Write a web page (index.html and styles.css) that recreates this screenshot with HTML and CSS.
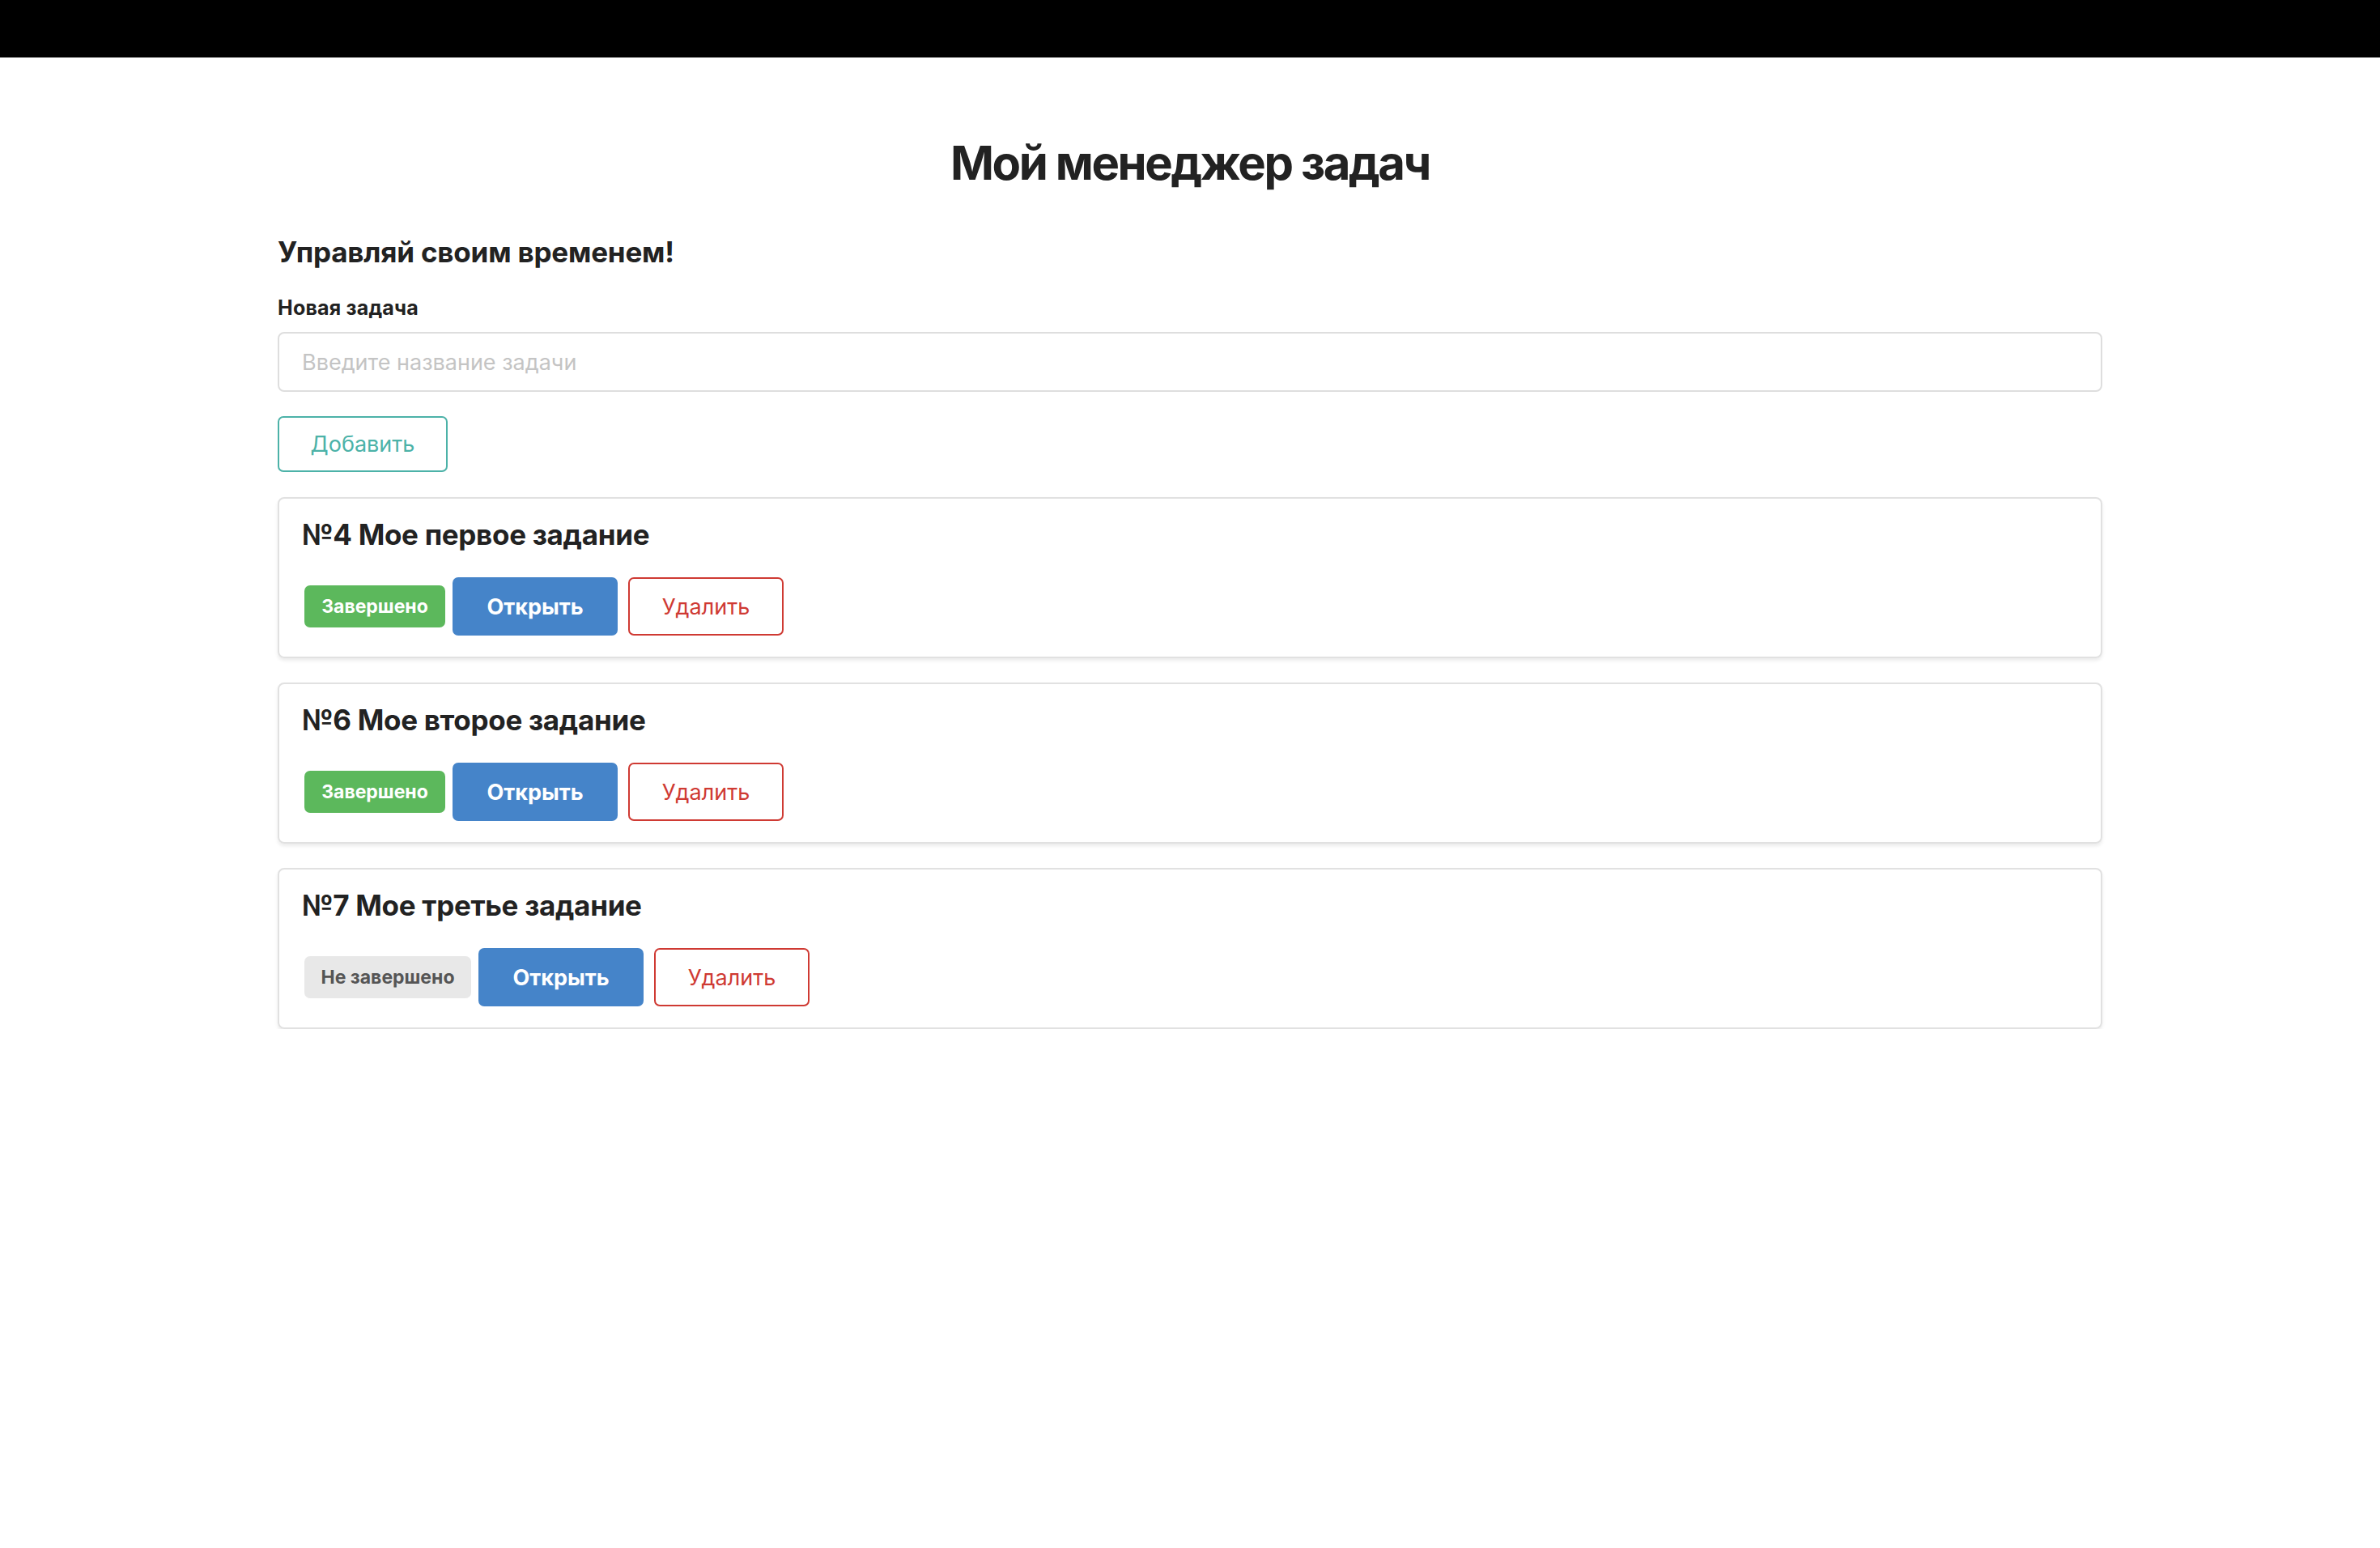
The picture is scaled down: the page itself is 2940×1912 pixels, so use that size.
FILE: index.html
```html
<!DOCTYPE html>
<html lang="ru">
<head>
<meta charset="utf-8">
<title>Мой менеджер задач</title>
<link rel="stylesheet" href="styles.css">
</head>
<body>
<header class="topbar"></header>
<main class="container">
  <h1 class="page-title">Мой менеджер задач</h1>
  <h2 class="subtitle">Управляй своим временем!</h2>
  <label class="field-label" for="task">Новая задача</label>
  <input class="field-input" id="task" type="text" placeholder="Введите название задачи">
  <button class="btn btn-add" type="button">Добавить</button>
  <section class="task-list">
    <article class="task-card">
      <h3 class="task-title">№4 Мое первое задание</h3>
      <div class="task-actions">
        <span class="badge badge-done">Завершено</span>
        <button class="btn btn-open" type="button">Открыть</button>
        <button class="btn btn-delete" type="button">Удалить</button>
      </div>
    </article>
    <article class="task-card">
      <h3 class="task-title">№6 Мое второе задание</h3>
      <div class="task-actions">
        <span class="badge badge-done">Завершено</span>
        <button class="btn btn-open" type="button">Открыть</button>
        <button class="btn btn-delete" type="button">Удалить</button>
      </div>
    </article>
    <article class="task-card">
      <h3 class="task-title">№7 Мое третье задание</h3>
      <div class="task-actions">
        <span class="badge badge-todo">Не завершено</span>
        <button class="btn btn-open" type="button">Открыть</button>
        <button class="btn btn-delete" type="button">Удалить</button>
      </div>
    </article>
  </section>
</main>
</body>
</html>
```

FILE: styles.css
```css
* { box-sizing: border-box; }

body {
  margin: 0;
  background: #fff;
  color: #222;
  font-family: Inter, "Liberation Sans", sans-serif;
}

.topbar {
  height: 71px;
  background: #000;
}

.container {
  width: 2254px;
  margin: 0 auto;
  display: flex;
  flex-direction: column;
  align-items: flex-start;
}

.page-title {
  align-self: stretch;
  text-align: center;
  margin: 94px 0 0;
  font-size: 58px;
  line-height: 72px;
  font-weight: 700;
  letter-spacing: -2.4px;
}

.subtitle {
  margin: 54px 0 0;
  font-size: 35px;
  line-height: 41px;
  font-weight: 700;
  letter-spacing: -0.2px;
}

.field-label {
  margin-top: 34px;
  font-size: 25px;
  line-height: 29px;
  font-weight: 700;
  letter-spacing: 0.2px;
}

.field-input {
  align-self: stretch;
  margin-top: 15px;
  height: 74px;
  padding: 0 28px;
  border: 2px solid #dedede;
  border-radius: 8px;
  font-family: inherit;
  font-size: 27px;
  color: #222;
  outline: none;
}

.field-input::placeholder {
  color: #c4c4c4;
}

.btn {
  font-family: inherit;
  font-size: 27px;
  line-height: 33px;
  border-radius: 7px;
  cursor: pointer;
  background: #fff;
}

.btn-add {
  margin-top: 30px;
  width: 210px;
  height: 69px;
  border: 2px solid #4cb2a8;
  color: #4cb2a8;
  font-weight: 400;
}

.task-list {
  align-self: stretch;
  margin-top: 31px;
  display: flex;
  flex-direction: column;
  gap: 30px;
}

.task-card {
  border: 2px solid #e1e1e1;
  border-radius: 8px;
  box-shadow: 0 3px 4px rgba(0, 0, 0, 0.08);
  padding: 23px 28px 26px;
  height: 199px;
}

.task-title {
  margin: 0;
  font-size: 35px;
  line-height: 43px;
  font-weight: 700;
  letter-spacing: -0.3px;
}

.task-actions {
  margin-top: 31px;
  display: flex;
  align-items: center;
  padding-left: 3px;
}

.badge {
  display: flex;
  align-items: center;
  justify-content: center;
  height: 52px;
  padding: 0 20px;
  border-radius: 7px;
  font-size: 23px;
  font-weight: 700;
}

.badge-done {
  width: 174px;
  background: #5cb85c;
  color: #fff;
}

.badge-todo {
  width: 206px;
  background: #e8e8e8;
  color: #555;
}

.btn-open {
  margin-left: 9px;
  width: 204px;
  height: 72px;
  border: none;
  background: #4584c9;
  color: #fff;
  font-weight: 700;
}

.btn-delete {
  margin-left: 13px;
  width: 192px;
  height: 72px;
  border: 2px solid #cf3a33;
  color: #cf3a33;
  font-weight: 400;
}
```
